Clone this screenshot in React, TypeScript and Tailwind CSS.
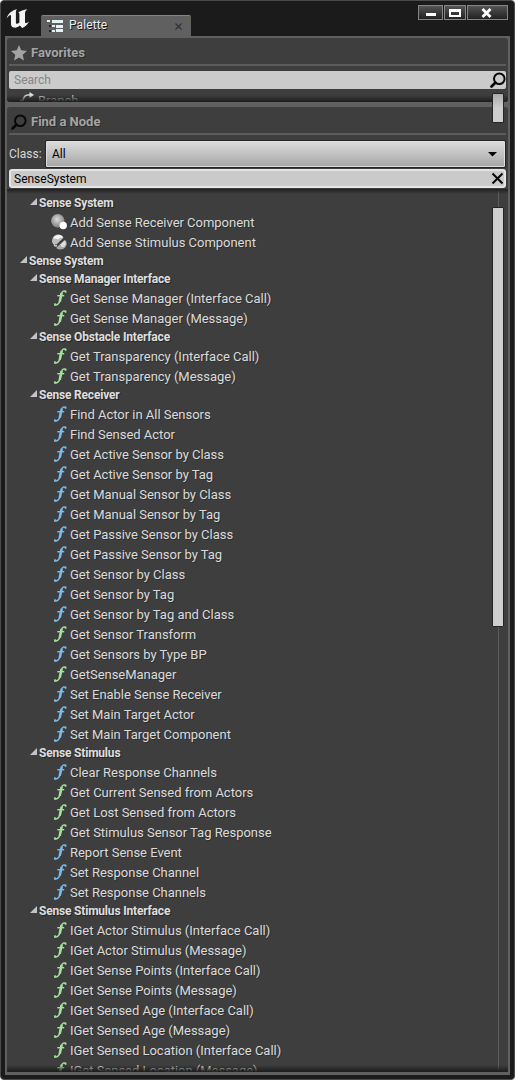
import React from "react";

type Kind = "g" | "b" | "sphere" | "split";
type Item = [Kind, string];
type Group = { title: string; root?: boolean; items: Item[] };

const groups: Group[] = [
  { title: "Sense System", items: [["sphere", "Add Sense Receiver Component"], ["split", "Add Sense Stimulus Component"]] },
  { title: "Sense System", root: true, items: [] },
  { title: "Sense Manager Interface", items: [["g", "Get Sense Manager (Interface Call)"], ["g", "Get Sense Manager (Message)"]] },
  { title: "Sense Obstacle Interface", items: [["g", "Get Transparency (Interface Call)"], ["g", "Get Transparency (Message)"]] },
  {
    title: "Sense Receiver",
    items: [
      ["b", "Find Actor in All Sensors"],
      ["b", "Find Sensed Actor"],
      ["b", "Get Active Sensor by Class"],
      ["b", "Get Active Sensor by Tag"],
      ["b", "Get Manual Sensor by Class"],
      ["b", "Get Manual Sensor by Tag"],
      ["b", "Get Passive Sensor by Class"],
      ["b", "Get Passive Sensor by Tag"],
      ["b", "Get Sensor by Class"],
      ["b", "Get Sensor by Tag"],
      ["b", "Get Sensor by Tag and Class"],
      ["g", "Get Sensor Transform"],
      ["b", "Get Sensors by Type BP"],
      ["g", "GetSenseManager"],
      ["b", "Set Enable Sense Receiver"],
      ["b", "Set Main Target Actor"],
      ["b", "Set Main Target Component"],
    ],
  },
  {
    title: "Sense Stimulus",
    items: [
      ["b", "Clear Response Channels"],
      ["g", "Get Current Sensed from Actors"],
      ["g", "Get Lost Sensed from Actors"],
      ["g", "Get Stimulus Sensor Tag Response"],
      ["b", "Report Sense Event"],
      ["b", "Set Response Channel"],
      ["b", "Set Response Channels"],
    ],
  },
  {
    title: "Sense Stimulus Interface",
    items: [
      ["g", "IGet Actor Stimulus (Interface Call)"],
      ["g", "IGet Actor Stimulus (Message)"],
      ["g", "IGet Sense Points (Interface Call)"],
      ["g", "IGet Sense Points (Message)"],
      ["g", "IGet Sensed Age (Interface Call)"],
      ["g", "IGet Sensed Age (Message)"],
      ["g", "IGet Sensed Location (Interface Call)"],
      ["g", "IGet Sensed Location (Message)"],
    ],
  },
];

function Logo() {
  return (
    <svg className="ml-[5px] mt-[7px] h-[21px] w-[25px] shrink-0" viewBox="0 0 25 21" fill="#f4f4f4">
      <path d="M0.500 10.500C2 6 5.500 2.300 11 1.300C9.800 2.800 9.900 4 9.900 5.500V14.500C9.900 16 11.300 16.300 13.400 14.600V6.200C13.400 5 13 4.500 12 4.500C14.500 2.800 17.500 2 21.500 1.200C19.500 2.700 19 3.800 19 5.500V14C19 15.700 20.500 15.500 23 13.500C21.500 17 19 18.800 16.200 20L13.800 17.600C11.800 19.300 10 20 7.700 19.500C5.500 19 5 17.500 5 15.500V8C5 6.200 3.500 6.700 0.500 10.500Z" />
    </svg>
  );
}

function TreeIcon() {
  return (
    <svg className="h-[14px] w-[17px] shrink-0" viewBox="0 0 17 14" shapeRendering="crispEdges">
      <path d="M0 1h3v2H0zM5 1h11v3H5zM5 6h3v2H5zM9 6h7v3H9zM5 11h3v2H5zM9 10h7v3H9z" fill="#e4f2f8" />
      <path d="M2 6h2v2H2zM2 11h2v2H2z" fill="#252525" />
    </svg>
  );
}

function Magnifier({ className }: { className: string }) {
  return (
    <svg className={className} viewBox="0 0 16 16" fill="none" stroke="#080808">
      <circle cx="9.300" cy="6.700" r="5.300" strokeWidth="2" />
      <path d="M5.300 10.700L1.500 14.500" strokeWidth="2.700" strokeLinecap="round" />
    </svg>
  );
}

function RowIcon({ kind }: { kind: Kind }) {
  if (kind === "sphere")
    return (
      <svg className="h-4 w-4" viewBox="0 0 16 16">
        <defs>
          <radialGradient id="ball" cx="45%" cy="40%"><stop offset="0" stopColor="#dcdcdc" /><stop offset="1" stopColor="#8d8d8d" /></radialGradient>
        </defs>
        <circle cx="6.800" cy="6.800" r="6.700" fill="url(#ball)" />
        <circle cx="12.200" cy="11.500" r="3.700" fill="#fff" />
      </svg>
    );
  if (kind === "split")
    return (
      <svg className="h-4 w-4" viewBox="0 0 16 16">
        <path d="M1 7.500C1 3 4 .5 7.500 .5C9.800 .5 11.800 1.800 12.500 3.800L5.500 10.500C3 11 1.200 9.800 1 7.500Z" fill="#bdbdbd" />
        <path d="M2 4.500C3.500 1.500 6.500 .5 9 1C10.500 1.500 11.500 2.500 12 3.500Q9 3 7 5.500Q5 4 2 4.500Z" fill="#f5f5f5" />
        <path d="M6.500 12.500L13.500 6C16 7 16.200 10 15 12.300C13 15.800 8.500 16.500 5.500 14.200Q5.300 13.200 6.500 12.500Z" fill="#a9a9a9" />
        <path d="M9.500 10.500L13.500 6.800C15.500 8 15 12 12.500 13Q9.500 13.500 9.500 10.500Z" fill="#dedede" />
        <path d="M3 10.500Q4 13 6 11.500" fill="none" stroke="#e6e6e6" strokeWidth="1.200" />
      </svg>
    );
  return (
    <svg className={`h-4 w-4 ${kind === "g" ? "text-[#a3e49b]" : "text-[#78bdef]"}`} viewBox="0 0 16 16" fill="none" stroke="currentColor">
      <path d="M15 1.500C12.800 .3 11.300 1.200 10.700 3.200C10 5.500 9.600 8.200 8.800 11C8.100 13.800 6.200 15.500 3.300 14.700" strokeWidth="1.500" />
      <path d="M10.700 2.800C9.900 5.500 9.600 8.200 8.700 11.700" strokeWidth="2.500" />
      <path d="M6.300 5.700H13.200" strokeWidth="1.400" />
      <path d="M14.600 .8V2.800M4 13.200V15.500" strokeWidth="1.600" />
    </svg>
  );
}

function Header({ title, root }: { title: string; root?: boolean }) {
  return (
    <div className={`flex h-[18px] shrink-0 items-center gap-[2px] ${root ? "pl-[13px]" : "pl-[23px]"}`}>
      <svg className="mb-[3px] h-[7px] w-[7px] shrink-0" viewBox="0 0 7 7"><path d="M7 0V7H0Z" fill="#c4c4c4" /></svg>
      <span className="text-[12px] font-bold leading-[18px] tracking-[-0.19px] text-[#dedede] [text-shadow:1px_1px_0_#252525]">{title}</span>
    </div>
  );
}

function Heading({ icon, children }: { icon: React.ReactNode; children: React.ReactNode }) {
  return (
    <div className="mx-[2px] flex h-[28px] shrink-0 items-center gap-1 border-b-2 border-[#5c5c5c] pl-[2px] pt-[3px] text-[13px] font-bold text-[#a4a4a4]">
      {icon}
      <span className="[text-shadow:1px_1px_0_#2b2b2b]">{children}</span>
    </div>
  );
}

export default function App() {
  return (
    <div className="relative flex h-[1080px] w-[515px] flex-col overflow-hidden rounded-[4px] border border-[#4b4b4b] bg-[#1b1b1b] font-[Roboto,sans-serif]">
      <div className="flex h-[35px] shrink-0">
        <Logo />
        <div className="ml-[10px] mt-[14px] flex h-[21px] w-[150px] items-center rounded-t-[2px] border-t border-[#a38a20] bg-[#606060] pl-[6px] pr-[9px]">
          <TreeIcon />
          <span className="mb-[2px] ml-[5px] text-[12px] tracking-[0.1px] text-[#ededed] [text-shadow:1px_1px_0_#111]">Palette</span>
          <svg className="ml-auto h-[7px] w-[7px]" viewBox="0 0 7 7"><path d="M.5.5l6 6M6.500.5l-6 6" stroke="#303030" strokeWidth="1.200" /></svg>
        </div>
        <div className="ml-auto mr-[6px] mt-[4px] flex h-[15px] gap-[1px]">
          <div className="flex w-[25px] justify-center border border-[#858585] bg-linear-to-b from-[#555] to-[#222]"><i className="mt-[7px] h-[3px] w-[10px] bg-white" /></div>
          <div className="flex w-[22px] justify-center border border-[#858585] bg-linear-to-b from-[#555] to-[#222]"><i className="mt-[3px] h-[8px] w-[12px] border-2 border-t-[3px] border-white" /></div>
          <div className="flex w-[41px] items-center justify-center border border-[#858585] bg-linear-to-b from-[#555] to-[#222]">
            <svg className="mr-[3px] h-[10px] w-[11px]" viewBox="0 0 11 10"><path d="M1.500 1L9.500 9M9.500 1L1.500 9" stroke="#fff" strokeWidth="2.800" /></svg>
          </div>
        </div>
      </div>

      <div className="mx-[4px] flex h-[1039px] shrink-0 flex-col bg-[#606060] px-[2px] pb-[3px] pt-[2px]">
        <section className="relative flex h-[64px] shrink-0 flex-col overflow-hidden rounded-[3px] bg-[#3e3e3e]">
          <Heading icon={<svg className="h-4 w-4" viewBox="0 0 16 16"><path d="M8 0L10.300 5.300L16 6L11.700 9.800L13 15.500L8 12.500L3 15.500L4.300 9.800L0 6L5.700 5.300Z" fill="#a3a3a3" /></svg>}>Favorites</Heading>
          <div className="mx-[2px] mt-[5px] flex h-[18px] shrink-0 items-center justify-between rounded-[2px] bg-[#cbcbcb] pl-[5px]">
            <span className="text-[12px] text-[#868686]">Search</span>
            <Magnifier className="h-4 w-4" />
          </div>
          <div className="flex h-[20px] shrink-0 items-center pl-[13px] pt-[3px]">
            <svg className="mb-[3px] h-4 w-4" viewBox="0 0 16 16"><path d="M0 9.500H3Q4 4 8 4H12" fill="none" stroke="#d6d6d6" strokeWidth="1.700" /><path d="M9.500 1L14 4L9.500 7Z" fill="#e0e0e0" /></svg>
            <span className="ml-[2px] text-[13px] text-[#c4c4c4]">Branch</span>
          </div>
          <div className="absolute inset-x-0 bottom-0 h-[7px] bg-linear-to-b from-transparent to-[#1c1c1c]" />
        </section>

        <section className="mt-[5px] flex min-h-0 flex-1 flex-col rounded-[3px] bg-[#3e3e3e]">
          <Heading icon={<Magnifier className="h-4 w-4" />}>Find a Node</Heading>
          <div className="mt-[5px] flex h-[28px] shrink-0 items-center px-[2px]">
            <span className="w-[36px] text-[12px] text-[#d8d8d8]">Class:</span>
            <div className="flex h-[28px] flex-1 items-center justify-between rounded-[2px] border border-[#252525] bg-linear-to-b from-[#dddddd] to-[#a5a5a5] pl-[6px] pr-[8px] shadow-[inset_0_0_0_1px_#dedede]">
              <span className="text-[12px] text-black">All</span>
              <svg className="h-[5px] w-[9px]" viewBox="0 0 9 5"><path d="M0 0H9L4.500 4.500Z" fill="#050505" /></svg>
            </div>
          </div>
          <div className="mx-[2px] mt-[1px] flex h-[19px] shrink-0 items-center justify-between rounded-[3px] border-2 border-[#e5e5e5] bg-[#cacaca] pl-[3px]">
            <span className="text-[12px] text-black">SenseSystem</span>
            <svg className="h-[13px] w-[13px]" viewBox="0 0 13 13"><path d="M1.500 1.500l10 10M11.500 1.500l-10 10" stroke="#080808" strokeWidth="2" /></svg>
          </div>
          <div className="relative mt-[1px] flex min-h-0 flex-1 flex-col overflow-hidden pt-[5px]">
            {groups.map((group, i) => (
              <React.Fragment key={i}>
                <Header title={group.title} root={group.root} />
                {group.items.map(([kind, name]) => (
                  <div key={name} className="flex h-[20px] shrink-0 items-center pl-[44px]">
                    <RowIcon kind={kind} />
                    <span className="ml-[3px] whitespace-nowrap pt-[2px] text-[13px] leading-[20px] tracking-[-0.02px] text-[#dadada] [text-shadow:1px_1px_0_#303030]">{name}</span>
                  </div>
                ))}
              </React.Fragment>
            ))}
            <div className="absolute right-[9px] top-0 h-full w-px bg-[#5d5d5d]" />
            <div className="absolute right-[4px] top-[18px] h-[420px] w-[12px] rounded-[1px] border border-[#232323] bg-[#cecece]" />
            <div className="absolute inset-x-0 top-0 h-[5px] bg-linear-to-b from-[#202020] to-transparent" />
            <div className="absolute inset-x-0 bottom-0 h-[7px] bg-linear-to-b from-transparent to-[#1c1c1c]" />
          </div>
        </section>
      </div>
      <div className="absolute left-[491px] top-[92px] h-[30px] w-[12px] rounded-[1px] border border-[#252525] bg-linear-to-b from-[#aaa] via-[#cecece] to-[#cecece]" />
    </div>
  );
}
